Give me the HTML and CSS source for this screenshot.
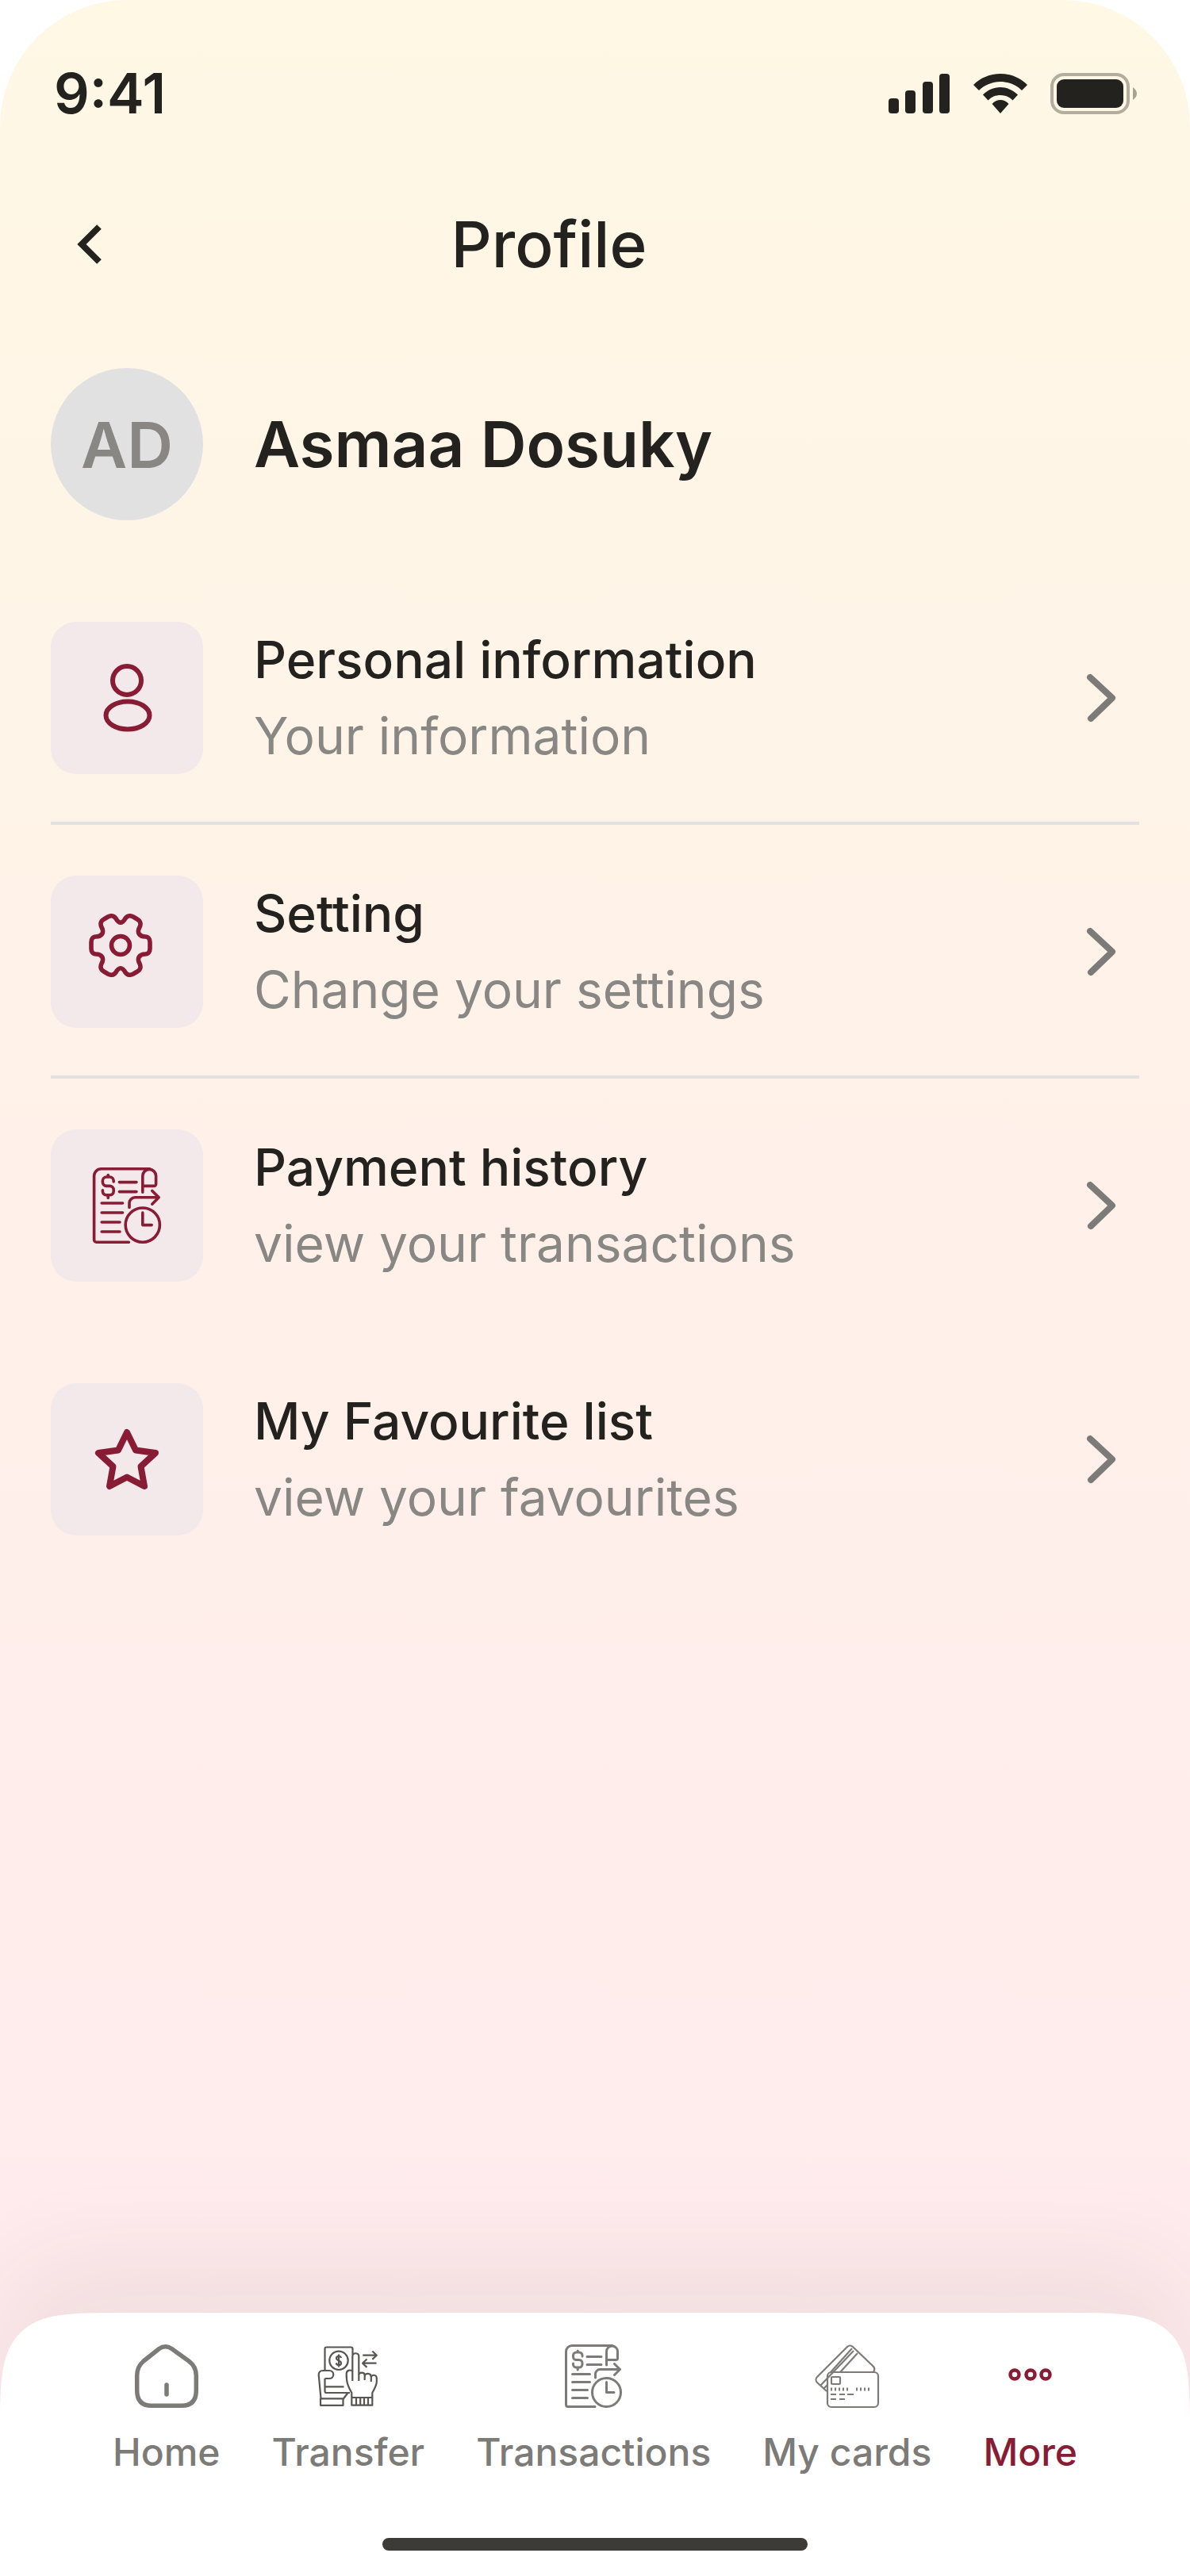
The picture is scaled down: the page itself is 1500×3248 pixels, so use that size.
FILE: index.html
```html
<!DOCTYPE html>
<html lang="en">
<head>
<meta charset="utf-8">
<meta name="viewport" content="width=device-width, initial-scale=1">
<title>Profile</title>
<link rel="stylesheet" href="styles.css">
</head>
<body>
<svg class="sprite" aria-hidden="true">
  <symbol id="chevron" viewBox="0 0 96 96">
    <path d="M34 22l28 26-27 26" fill="none" stroke="currentColor" stroke-width="8" stroke-linecap="round" stroke-linejoin="round"/>
  </symbol>
  <symbol id="history" viewBox="0 0 72 80">
    <g fill="none" stroke="currentColor" stroke-width="3" stroke-linecap="round" stroke-linejoin="round">
      <path d="M38 78.500H4a2.500 2.500 0 0 1-2.500-2.500V9A7.500 7.500 0 0 1 9 1.500h51"/>
      <path d="M52.500 26V9a7 7 0 0 1 14 0v8.500a2 2 0 0 1-2 2h-12"/>
      <path d="M28 15.500h18M28 25.500h18M9.500 37.500h22M9.500 47.500h22M9.500 57.500h19M9.500 67.500h19"/>
      <path d="M22 15v-1a4 4 0 0 0-4-4h-3.500a4 4 0 0 0-4 4v1.500a4 4 0 0 0 4 4H18a4 4 0 0 1 4 4V25a4 4 0 0 1-4 4h-3.500a4 4 0 0 1-4-4v-1M16.200 8v2M16.200 29v3"/>
      <path d="M38.500 42v-4.500a6 6 0 0 1 6-6h24M62.500 24.500l7 7-7 7"/>
      <circle cx="52.500" cy="60.500" r="18"/>
      <path d="M52.500 47.500v13h9.500"/>
    </g>
  </symbol>
</svg>
<div class="screen">
  <div class="status-bar">
    <span class="time">9:41</span>
    <div class="status-icons">
      <svg class="signal" viewBox="0 0 78 50" fill="currentColor" aria-hidden="true">
        <rect y="31" width="13" height="19" rx="4"/>
        <rect x="21" y="21" width="13" height="29" rx="4"/>
        <rect x="43" y="10" width="13" height="40" rx="4"/>
        <rect x="64" width="13" height="50" rx="4"/>
      </svg>
      <svg class="wifi" viewBox="0 0 68 50" fill="currentColor" aria-hidden="true">
        <path d="M34 0C47 0 59 5 68 14L61 21C54 14 44 10 34 10S14 14 7 21L0 14C9 5 21 0 34 0Z"/>
        <path d="M34 17C42.500 17 50 20.500 56 26.500L49.500 33.500C45 29 40 27 34 27S23 29 18.500 33.500L12 26.500C18 20.500 25.500 17 34 17Z"/>
        <path d="M34 33C38 33 41.500 34.500 44.500 38L34 50 23.500 38C26.500 34.500 30 33 34 33Z"/>
      </svg>
      <svg class="battery" viewBox="0 0 110 52" aria-hidden="true">
        <rect x="2" y="2" width="96" height="48" rx="15" fill="none" stroke="currentColor" stroke-width="4" opacity=".35"/>
        <rect x="8" y="8" width="84" height="36" rx="9" fill="currentColor"/>
        <path d="M104 18C107 20 109 23 109 26S107 32 104 34Z" fill="currentColor" opacity=".4"/>
      </svg>
    </div>
  </div>

  <header class="header">
    <button class="back" type="button" aria-label="Back">
      <svg viewBox="0 0 96 96" aria-hidden="true"><path d="M61 26L39 48l22 22" fill="none" stroke="currentColor" stroke-width="8"/></svg>
    </button>
    <h1 class="title">Profile</h1>
  </header>

  <main class="content">
    <div class="user">
      <div class="avatar">AD</div>
      <h2 class="name">Asmaa Dosuky</h2>
    </div>
    <nav class="menu" aria-label="Profile options">
      <a class="row ruled" href="#personal">
        <span class="tile"><svg viewBox="0 0 96 96" aria-hidden="true"><g fill="none" stroke="currentColor" stroke-width="6"><ellipse cx="48" cy="26" rx="18" ry="18"/><ellipse cx="49" cy="70" rx="27.500" ry="17.500"/></g></svg></span>
        <span class="text"><span class="label">Personal information</span><span class="hint">Your information</span></span>
        <svg class="chevron" aria-hidden="true"><use href="#chevron"/></svg>
      </a>
      <a class="row ruled" href="#settings">
        <span class="tile tile-gear"><svg viewBox="0 0 80 80" aria-hidden="true"><g fill="none" stroke="currentColor" stroke-width="5.600" stroke-linejoin="round"><circle cx="40" cy="40" r="11.500"/><path d="M34 6C31 2 28 2 24 4L19 7C15 9 14 13 16 17C20 24 16 29 9 29C5 29 3 32 3 36V44C3 48 5 51 9 51C16 51 20 56 16 63C14 67 15 71 19 73L24 76C28 78 31 78 34 74C38 67 42 67 46 74C49 78 52 78 56 76L61 73C65 71 66 67 64 63C60 56 64 51 71 51C75 51 77 48 77 44V36C77 32 75 29 71 29C64 29 60 24 64 17C66 13 65 9 61 7L56 4C52 2 49 2 46 6C42 13 38 13 34 6Z"/></g></svg></span>
        <span class="text"><span class="label">Setting</span><span class="hint">Change your settings</span></span>
        <svg class="chevron" aria-hidden="true"><use href="#chevron"/></svg>
      </a>
      <a class="row" href="#payments">
        <span class="tile"><svg aria-hidden="true"><use href="#history"/></svg></span>
        <span class="text"><span class="label">Payment history</span><span class="hint">view your transactions</span></span>
        <svg class="chevron" aria-hidden="true"><use href="#chevron"/></svg>
      </a>
      <a class="row" href="#favourites">
        <span class="tile"><svg viewBox="0 0 96 96" aria-hidden="true"><path d="M48 14L59 36.500 84 40 65.500 57 70 82 48 70.500 26 82 30.500 57 12 40 37 36.500Z" fill="none" stroke="currentColor" stroke-width="8" stroke-linejoin="round"/></svg></span>
        <span class="text"><span class="label">My Favourite list</span><span class="hint">view your favourites</span></span>
        <svg class="chevron" aria-hidden="true"><use href="#chevron"/></svg>
      </a>
    </nav>
  </main>

  <footer class="dock">
    <nav class="tabs" aria-label="Main">
      <a class="tab" href="#home">
        <svg viewBox="0 0 96 96" aria-hidden="true"><path d="M38.500 13.500Q46.500 8 54.500 13.500L76 29Q85.300 36 85.300 47V66Q85.300 85.300 67 85.300H29Q10.700 85.300 10.700 66V47Q10.700 36 19 29ZM48 59V71" fill="none" stroke="currentColor" stroke-width="5.500" stroke-linecap="round"/></svg>
        <span>Home</span>
      </a>
      <a class="tab" href="#transfer">
        <svg class="dark" viewBox="0 0 96 96" aria-hidden="true"><g fill="none" stroke="currentColor" stroke-width="2.200" stroke-linejoin="round">
          <path d="M18.500 41V13.500a2 2 0 0 1 2-2h31a2 2 0 0 1 2 2V21"/>
          <circle cx="36" cy="28.300" r="11.700"/>
          <path d="M39 25c-1-3.500-6-2.500-6 .500s6 2.500 6 6-5 3.500-6.500 0M36 20.500v16"/>
          <path d="M18.500 51H24c7 0 7-10 0-10h-8c-3.500 0-5.300 2-5.300 5.500L13.500 76M18.500 51v16a2 2 0 0 0 2 2H50M18.500 61.300h24M13 76.300h28.500v8.500H13zM41.500 77l6-8"/>
          <path d="M61.300 54V23c0-5-8-5-8 0v31M53.300 42c-3-3-7.600-1-7.600 3 0 10 1 14 6.600 24v6h26v-6c4-7 5.500-10 5.500-14v-4c0-5.500-7-5.500-7-1v5M61.300 47c0-4.500 7.400-4.500 7.400 0v6M68.700 48c0-4 8-4.500 8 1M52.300 74.700v10h26v-10M58 75v9M63.200 75v9M68 75v9M73 75v9"/>
          <path d="M66.300 21.700h17M78.300 16.500l5.500 5.200-5.500 5.200M83.500 31.700H67M71.500 26.500L66 31.700l5.500 5.200"/>
        </g></svg>
        <span>Transfer</span>
      </a>
      <a class="tab" href="#transactions">
        <svg class="history" aria-hidden="true"><use href="#history"/></svg>
        <span>Transactions</span>
      </a>
      <a class="tab" href="#cards">
        <svg viewBox="0 0 96 96" aria-hidden="true"><g fill="none" stroke="currentColor" stroke-width="2.200">
          <rect x="23" y="43" width="64" height="44" rx="5"/>
          <path d="M22 67L10 56a5 5 0 0 1 0-7L48 11a5 5 0 0 1 7 0L80 35q4 3 1 8M14 60l42-44M18 64l5-5M27 43L54 13M39 43L61 19"/>
          <rect x="28" y="49" width="11" height="9" rx="1"/>
          <path d="M27 64.500h24M59 64.500h20" stroke-width="4" stroke-dasharray="2 3"/>
          <path d="M27 71h7M38 71h7M48 71h8M27 77h7M38 77h7"/>
        </g></svg>
        <span>My cards</span>
      </a>
      <a class="tab active" href="#more" aria-current="page">
        <svg viewBox="0 0 96 96" aria-hidden="true"><g fill="none" stroke="currentColor" stroke-width="4.500"><circle cx="28" cy="46" r="5.500"/><circle cx="48" cy="46" r="5.500"/><circle cx="67" cy="46" r="5.500"/></g></svg>
        <span>More</span>
      </a>
    </nav>
    <div class="home-indicator"></div>
  </footer>
</div>
</body>
</html>
```
FILE: styles.css
```css
:root {
  --ink: #24221e;
  --muted: #888784;
  --brand: #871c34;
}

* { box-sizing: border-box; }

body {
  margin: 0;
  background: #fff;
  color: var(--ink);
  font-family: Inter, "Liberation Sans", sans-serif;
}

h1, h2 { margin: 0; }
a { color: inherit; text-decoration: none; }
.sprite { display: none; }

.screen {
  display: flex;
  flex-direction: column;
  min-height: 100vh;
  overflow: hidden;
  border-radius: 160px 160px 0 0;
  background: linear-gradient(#fff8e5, #ffe9ee);
}

.status-bar {
  display: flex;
  align-items: center;
  justify-content: space-between;
  padding: 76px 66px 0 68px;
}

.time {
  font-size: 70px;
  font-weight: 600;
  line-height: 84px;
}

.status-icons {
  display: flex;
  align-items: center;
  gap: 29px;
}

.signal { width: 78px; height: 50px; }
.wifi { width: 68px; height: 50px; }
.battery { width: 110px; height: 52px; }

.header {
  display: flex;
  align-items: center;
  padding: 88px 276px 0 64px;
}

.back {
  width: 96px;
  height: 96px;
  padding: 0;
  border: 0;
  background: none;
  color: inherit;
}

.back svg { display: block; width: 96px; height: 96px; }

.title {
  flex: 1;
  text-align: center;
  font-size: 80px;
  font-weight: 500;
  line-height: 120px;
}

.content {
  flex: 1;
  padding: 96px 64px;
}

.user {
  display: flex;
  align-items: center;
  gap: 64px;
  margin-bottom: 128px;
}

.avatar {
  display: grid;
  place-items: center;
  width: 192px;
  height: 192px;
  border-radius: 50%;
  background: #e2e1e2;
  color: var(--muted);
  font-size: 80px;
  font-weight: 600;
}

.name {
  font-size: 80px;
  font-weight: 600;
  line-height: 120px;
}

.row {
  display: flex;
  align-items: center;
  gap: 64px;
  margin-bottom: 64px;
  padding-bottom: 64px;
}

.ruled {
  padding-bottom: 60px;
  border-bottom: 4px solid #e2e1e2;
}

.tile {
  display: grid;
  place-items: center;
  width: 192px;
  height: 192px;
  border-radius: 32px;
  background: #f3e8ea;
  color: var(--brand);
}

.tile svg { width: 96px; height: 96px; }

.tile-gear {
  place-items: start;
  padding: 48px;
}

.tile-gear svg { width: 80px; height: 80px; }

.text {
  flex: 1;
  display: flex;
  flex-direction: column;
  font-size: 64px;
  line-height: 96px;
}

.label { font-weight: 500; }
.hint { color: var(--muted); }

.chevron {
  width: 96px;
  height: 96px;
  color: #7c7b78;
}

.dock {
  display: flex;
  flex-direction: column;
  align-items: center;
  gap: 72px;
  padding: 32px 64px;
  border-radius: 96px 96px 0 0;
  background: #fff;
  box-shadow: 0 -64px 128px rgba(54, 53, 48, .07);
}

@supports (corner-shape: squircle) {
  .dock {
    border-radius: 160px 160px 0 0;
    corner-shape: squircle;
  }
}

.tabs {
  display: flex;
  justify-content: center;
  gap: 65px;
}

.tab {
  display: flex;
  flex-direction: column;
  align-items: center;
  gap: 12px;
  color: #7c7b78;
  font-size: 48px;
  font-weight: 500;
  line-height: 72px;
}

.tab svg { width: 96px; height: 96px; }
.tab .history { height: 80px; margin: 8px 0; }
.tab .dark { color: #575651; }
.tab.active { color: var(--brand); }

.home-indicator {
  width: 536px;
  height: 16px;
  border-radius: 8px;
  background: #3c3b37;
}
```
